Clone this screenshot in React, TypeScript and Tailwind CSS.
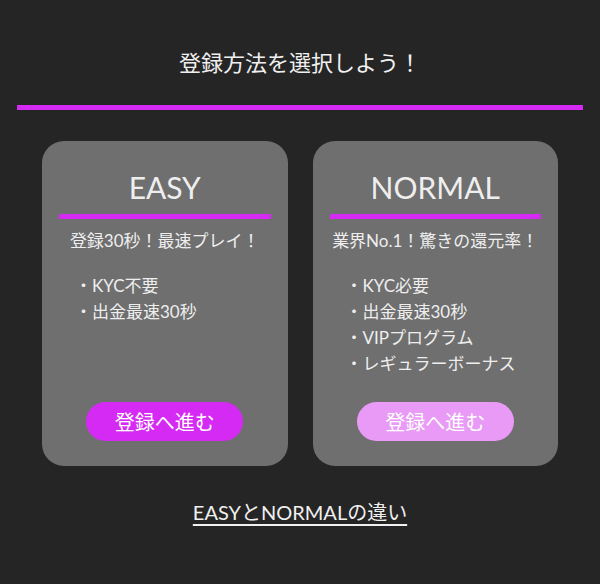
const font = { fontFamily: '"Lato", "Noto Sans CJK JP", sans-serif' };

type Plan = {
  name: string;
  tagline: string;
  items: string[];
  button: string;
};

const plans: Plan[] = [
  {
    name: "EASY",
    tagline: "登録30秒！最速プレイ！",
    items: ["KYC不要", "出金最速30秒"],
    button: "bg-[#d52af3]",
  },
  {
    name: "NORMAL",
    tagline: "業界No.1！驚きの還元率！",
    items: ["KYC必要", "出金最速30秒", "VIPプログラム", "レギュラーボーナス"],
    button: "bg-[#e99af6]",
  },
];

function PlanCard({ plan }: { plan: Plan }) {
  return (
    <div className="flex-1 h-[325px] rounded-[22px] bg-[#6f6f6f] flex flex-col pt-[28px] pb-[25px]">
      <h3 className="text-center text-[30px] leading-[36px] text-[#eeeeee]">{plan.name}</h3>
      <div className="mx-[17px] mt-[9px] h-[5px] bg-[#d52af3]" />
      <p className="mt-[10px] text-center text-[17px] leading-[24px] text-[#eeeeee]">{plan.tagline}</p>
      <ul className="mt-[20px] pl-[33px] text-[17px] leading-[26px] text-[#eeeeee]">
        {plan.items.map((it) => (
          <li key={it}>・{it}</li>
        ))}
      </ul>
      <button
        className={`mt-auto self-center w-[157px] h-[39px] rounded-full text-[20px] text-white ${plan.button}`}
      >
        登録へ進む
      </button>
    </div>
  );
}

export default function App() {
  return (
    <div className="w-[600px] h-[584px] bg-[#252525] pt-[49px]" style={font}>
      <h2 className="text-center text-[22px] leading-[28px] text-[#f0f0f0]">登録方法を選択しよう！</h2>
      <div className="mx-[17px] mt-[28px] h-[5px] bg-[#d52af3]" />
      <div className="mt-[31px] px-[42px] flex gap-[25px]">
        {plans.map((p) => (
          <PlanCard key={p.name} plan={p} />
        ))}
      </div>
      <div className="mt-[33px] text-center">
        <a className="text-[20px] leading-[26px] text-[#f0f0f0] underline underline-offset-4">
          EASYとNORMALの違い
        </a>
      </div>
    </div>
  );
}
